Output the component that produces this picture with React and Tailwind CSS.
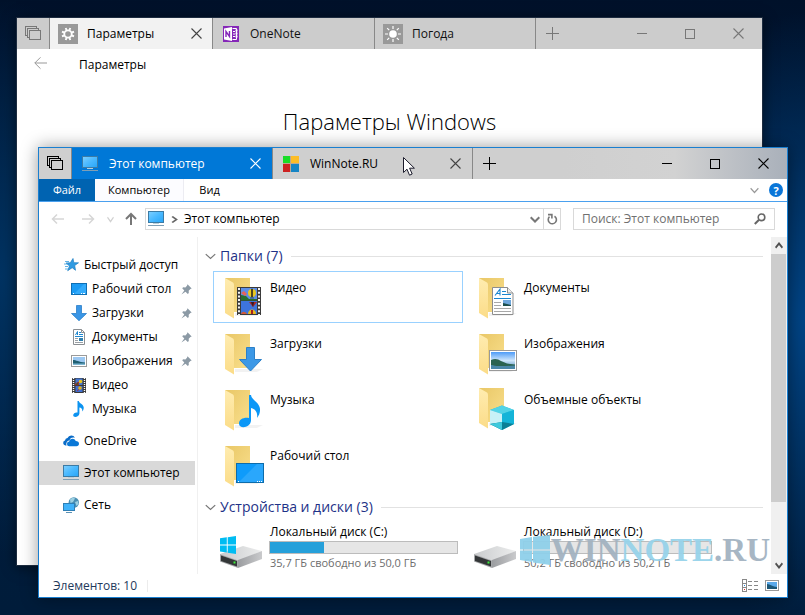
import React from "react";

/* ---------- line glyphs ---------- */

const TabSetIcon = ({ className }) => (
  <svg className={className} width="16" height="15" viewBox="0 0 16 15" fill="none" stroke="currentColor" shapeRendering="crispEdges">
    <path d="M2.500 9.500H.5V.5h11v2M4.500 11.500H2.500V2.500h11v2" />
    <rect x="4.500" y="4.500" width="11" height="9" />
  </svg>
);

const CloseIcon = ({ className }) => (
  <svg className={className} width="11" height="11" viewBox="0 0 11 11" stroke="currentColor" strokeWidth="1.1">
    <path d="M.5.5l10 10M10.500.5l-10 10" />
  </svg>
);

const PlusIcon = ({ className }) => (
  <svg className={className} width="13" height="13" viewBox="0 0 13 13" stroke="currentColor" shapeRendering="crispEdges">
    <path d="M6.500 0v13M0 6.500h13" />
  </svg>
);

const MinimizeIcon = () => (
  <svg width="10" height="10" viewBox="0 0 10 10" stroke="currentColor" shapeRendering="crispEdges">
    <path d="M0 4.500h10" />
  </svg>
);

const MaximizeIcon = () => (
  <svg width="10" height="10" viewBox="0 0 10 10" stroke="currentColor" fill="none" shapeRendering="crispEdges">
    <rect x=".5" y=".5" width="9" height="9" />
  </svg>
);

const Chevron = ({ className, width = 10, weight = 1.3 }) => (
  <svg className={className} width={width} height="7" viewBox="0 0 10 7" preserveAspectRatio="none" fill="none" stroke="currentColor" strokeWidth={weight}>
    <path d="M.7 1.200L5 5.500l4.300-4.300" />
  </svg>
);

const Arrow = ({ className, d }) => (
  <svg className={className} width="14" height="14" viewBox="0 0 14 14" fill="none" stroke="currentColor">
    <path d={d} />
  </svg>
);

/* ---------- tab icons ---------- */

const GearIcon = () => (
  <svg width="20" height="20" viewBox="0 0 20 20">
    <rect width="20" height="20" fill="#999" />
    <g stroke="#fff" fill="none">
      <circle cx="10" cy="10" r="3.700" strokeWidth="1.800" />
      <path strokeWidth="1.900" d="M8.500 6L7.700 4M11.500 6l.8-2M14 8.500l2-.8M14 11.500l2 .8M11.500 14l.8 2M8.500 14l-.8 2M6 11.500l-2 .8M6 8.500l-2-.8" />
    </g>
  </svg>
);

const OneNoteIcon = () => (
  <svg width="16" height="16" viewBox="0 0 16 16">
    <rect width="16" height="16" fill="#8526b8" />
    <path d="M1 2.500L9 1v14l-8-1.500z" fill="#fff" />
    <path d="M3 11V5.500L6.500 10.500V5" fill="none" stroke="#8526b8" strokeWidth="1.400" />
    <path d="M9.500 2.500h4v11h-4M10 5.500h2M10 8h2M10 10.500h2" fill="none" stroke="#fff" />
    <path d="M13.500 3.500v9" stroke="#fff" strokeWidth="2" strokeDasharray="2 1" />
  </svg>
);

const SunIcon = () => (
  <svg width="20" height="20" viewBox="0 0 20 20">
    <rect width="20" height="20" fill="#999" />
    <circle cx="10" cy="10" r="3.800" fill="#fff" />
    <path stroke="#fff" strokeWidth="1.200" d="M10 2v3M10 15v3M2 10h3M15 10h3M4.200 4.200l2 2M13.800 13.800l2 2M4.200 15.800l2-2M13.800 6.200l2-2" />
  </svg>
);

const SiteIcon = () => (
  <svg width="16" height="16" viewBox="0 0 16 16">
    <rect width="16" height="16" fill="#bca890" />
    <rect width="7" height="7" fill="#19dd28" />
    <rect x="8" width="8" height="7" fill="#fdbd27" />
    <rect y="8" width="7" height="8" fill="#cd2222" />
    <rect x="8" y="8" width="8" height="8" fill="#1685c5" />
  </svg>
);

/* ---------- small tree icons ---------- */

const MonitorIcon = () => (
  <svg width="16" height="16" viewBox="0 0 16 16">
    <defs>
      <linearGradient id="monitor" x1="0" y1="0" x2="1" y2="1">
        <stop offset="0" stopColor="#7fd0ff" />
        <stop offset=".5" stopColor="#4ab9ff" />
        <stop offset="1" stopColor="#27a5f7" />
      </linearGradient>
    </defs>
    <rect x=".5" y=".5" width="15" height="11" fill="url(#monitor)" stroke="#3c7ba5" />
    <path d="M5 12.500h6" stroke="#b9cfdb" />
    <path d="M0 14.500h16" stroke="#7f9fb5" />
  </svg>
);

const StarIcon = () => (
  <svg width="16" height="16" viewBox="0 0 16 16">
    <path d="M10 1.500l.8 4.200 4.700.1-3.800 2.700.8 4.800-3.300-2.600-4.500 3 1.800-4.800L3 6l4.300-.2z" fill="#2f9be2" stroke="#1d7cc0" strokeWidth=".7" />
    <path d="M2 4.500h4M1 7h4M2 9.500h3M2 12h3" stroke="#4fa9e2" strokeWidth=".9" />
  </svg>
);

const DesktopIcon = () => (
  <svg width="16" height="16" viewBox="0 0 16 16">
    <rect x=".5" y="2.500" width="15" height="11" fill="#1a9bf4" stroke="#0f6fb4" />
    <path d="M3 13L13 3h2v10z" fill="#45b6ff" opacity=".6" />
    <path d="M2 12.500h1M10 12.500h1M12 12.500h2" stroke="#fff" />
  </svg>
);

const DownloadIcon = () => (
  <svg width="16" height="16" viewBox="0 0 16 16">
    <path d="M5.500.5h5v8h5L8 15.700.5 8.500h5z" fill="#3a96e6" stroke="#2b7fc8" strokeWidth=".8" />
  </svg>
);

const DocIcon = () => (
  <svg width="16" height="16" viewBox="0 0 16 16">
    <path d="M2.500.5h8l3 3v12h-11z" fill="#fff" stroke="#8b8f93" />
    <path d="M10.500.5v3h3" fill="none" stroke="#8b8f93" />
    <path d="M4.500 6l2-3.500V6M8 3.500h2M8 5.500h4M4 7.500h8" stroke="#1d87d0" fill="none" />
    <path d="M4 9.500h3M4 11.500h3M4 13.500h8" stroke="#9aa0a5" />
    <rect x="8" y="9" width="4" height="3" fill="#2e7fae" />
  </svg>
);

const PictureIcon = () => (
  <svg width="16" height="16" viewBox="0 0 16 16">
    <rect x=".5" y="2.500" width="15" height="11" fill="#fff" stroke="#9a9a9a" />
    <rect x="2" y="4" width="12" height="8" fill="#9cc8f2" />
    <path d="M2 7c3 0 6 2 12 2.500V12H2z" fill="#1f5f72" />
    <path d="M2 10.500h12V12H2z" fill="#7fb8d4" />
  </svg>
);

const FilmIcon = () => (
  <svg width="16" height="16" viewBox="0 0 16 16">
    <rect x="1" y="1" width="14" height="15" fill="#3a3a3a" />
    <path d="M2.500 1v15M13.500 1v15" stroke="#fff" strokeWidth="1.400" strokeDasharray="1 1" />
    <rect x="4.500" y="1.500" width="7" height="6.500" fill="#4478d4" />
    <rect x="4.500" y="9" width="7" height="6" fill="#3f6fd0" />
    <circle cx="9.500" cy="4.500" r="1.800" fill="#e7c41d" />
    <circle cx="9" cy="11" r="1.800" fill="#e2b21d" />
    <path d="M4.500 7l3-2v3h-3zM6 14l2-1.500" fill="#1d6b2d" stroke="#b32625" strokeWidth=".8" />
  </svg>
);

const NotePath = "M10 0h1.500c.2 3.200 6.200 5.200 6.800 10 .3 2.300-.4 4.800-2 6.800.9-4.300-.8-6.800-4.800-8v14.200c-.6 5.200-9.500 6.800-9.500 2.800 0-3.300 4.300-5.500 8-4.500z";

const MusicIcon = () => (
  <svg width="16" height="16" viewBox="0 0 16 16">
    <path d="M6.500 0h1.300c.2 2.300 4.600 3 4.900 6.300.1 1.800-.4 3.100-1.400 4.200.3-2.400-.8-3.700-2.900-4v6c-.2 3.600-6.200 4.600-6.200 1.700 0-1.900 2.200-3.100 4.300-2.700z" fill="#0c93f0" />
  </svg>
);

const PinIcon = () => (
  <svg width="11" height="11" viewBox="0 0 11 11">
    <path d="M6.500.3l4.200 4.200-1.300.5-1.700 1.700.1 2.300-1 1L4.500 7.700.4 10.600 3.300 6.500 1.200 4.300l1-1 2.200.1L6 1.700z" fill="#8c9aa5" />
  </svg>
);

const OneDriveIcon = () => (
  <svg width="16" height="16" viewBox="0 0 16 16">
    <path d="M3.600 12.500H2.500A2.500 2.500 0 012 7.600 3 3 0 014.500 5 4.200 4.200 0 0112 4.800c-3.500-.8-5 .8-5.400 2.400-2.500.2-4 3-3 5.300z" fill="#0a6cc8" />
    <path d="M6.500 13.200a2.400 2.400 0 01-.3-4.800C6.500 5.200 11.500 4.400 12.700 8c2 0 3.300 1.100 3.300 2.700 0 1.400-1 2.500-2.500 2.500z" fill="#0a78d7" />
  </svg>
);

const NetworkIcon = () => (
  <svg width="16" height="16" viewBox="0 0 16 16">
    <circle cx="10.800" cy="5.500" r="5.200" fill="#4a8fb3" />
    <path d="M7 2.500c2-2 4-2 5-1L10 5 7.500 6zM12 5l3-1 .5 3-2 2z" fill="#9cd0e2" />
    <rect x=".5" y="6.500" width="11" height="7" fill="#3fb2fa" stroke="#2f7fb5" />
    <path d="M3 15.500h6" stroke="#5c92b5" />
  </svg>
);

/* ---------- large tile icons (48 x 48) ---------- */

const Folder = ({ raised, children }) => (
  <svg className="shrink-0 overflow-visible" width="48" height="48" viewBox="0 0 48 48">
    <defs>
      <linearGradient id="folderBack" x1="0" y1="0" x2="1" y2="1">
        <stop offset="0" stopColor="#e9c766" />
        <stop offset="1" stopColor="#f9df8d" />
      </linearGradient>
      <linearGradient id="folderFlap" x1="0" y1="0" x2="0" y2="1">
        <stop offset="0" stopColor="#ffecb0" />
        <stop offset="1" stopColor="#fbdc88" />
      </linearGradient>
    </defs>
    <g transform={raised ? "translate(0 -2)" : undefined}>
      <path d="M20 40h28l-6 3H20z" fill="#000" opacity=".05" />
      <path d="M10 5h25v34H18z" fill="url(#folderBack)" />
      <path d="M10 5l8 4.500q1 .8 1 2.500v33.500L10 40z" fill="url(#folderFlap)" />
    </g>
    {children}
  </svg>
);

const VideoFolder = () => (
  <Folder>
    <rect x="22" y="14" width="24" height="28" fill="#3b3b3b" />
    <path d="M24 15v27M44 15v27" stroke="#f2f2f2" strokeWidth="2" strokeDasharray="2 1.700" />
    <rect x="26" y="15" width="16" height="12" fill="#5d8ee6" />
    <rect x="26" y="28" width="16" height="13" fill="#3d74dc" />
    <path d="M26 22l5 1 3 3h8v1.500H26z" fill="#27702d" />
    <path d="M26 20l3-2 3 3-2 2z" fill="#e6655a" />
    <circle cx="37" cy="20" r="4" fill="#e9c81e" />
    <path d="M36.500 16h1v8h-1zM35 25h4" fill="#a8201f" stroke="#1d3420" strokeWidth=".7" />
    <path d="M34 29h8l-4 5z" fill="#a92626" />
    <path d="M36 29h3l-1 5z" fill="#2a1a2c" />
    <path d="M33 41c0-6 8-6 8 0z" fill="#e9b91e" />
    <path d="M26 41c1-3 4-3 6 0z" fill="#d15a3a" />
    <path d="M36 37h2v4h-2z" fill="#a8201f" />
  </Folder>
);

const DownloadsFolder = () => (
  <Folder>
    <path d="M31.500 18.500h8v12h7L35.500 42 24.500 30.500h7z" fill="#3c98e6" stroke="#2c80c8" />
  </Folder>
);

const MusicFolder = () => (
  <Folder>
    <path d="M34 10h2c.3 5 8.500 7 9 14 .2 3.500-.8 6.500-3 9 .9-5.500-1.200-9-6-10v12.500c-.5 7.500-12 9-12 3 0-4.300 5-6.500 10-5.500z" fill="#0b97f7" />
  </Folder>
);

const DesktopFolder = () => (
  <Folder>
    <rect x="21.500" y="22.500" width="27" height="19" fill="#0e9bfb" stroke="#0d6cab" />
    <path d="M24 41L42 23h6v18z" fill="#45b4fd" opacity=".5" />
    <path d="M23 40.500h1M42 40.500h1M44 40.500h1M46 40.500h1" stroke="#fff" />
  </Folder>
);

const DocumentsFolder = () => (
  <Folder>
    <path d="M23.500 14.500h15l5.500 5.500v21.500H23.500z" fill="#fff" stroke="#8d8d8d" />
    <path d="M38.500 14.500V20H44" fill="#eee" stroke="#8d8d8d" />
    <path d="M26 22.500l5-6.500v6.500M28 20.500h3M33 18.500h4M33 21.500h9M25 25.500h17" stroke="#1b86cf" strokeWidth="1.100" fill="none" />
    <path d="M25 29.500h7M25 32.500h7M25 35.500h17M25 38.500h17" stroke="#a8a8a8" />
    <rect x="34" y="27" width="8" height="6" fill="#6fa7dc" />
    <path d="M34 30l8 2v1h-8z" fill="#1d4f4d" />
  </Folder>
);

const PicturesFolder = () => (
  <Folder>
    <defs>
      <linearGradient id="sky" x1="0" y1="0" x2="0" y2="1">
        <stop offset="0" stopColor="#4d9bf7" />
        <stop offset=".5" stopColor="#cfe6fb" />
        <stop offset="1" stopColor="#4a86b8" />
      </linearGradient>
    </defs>
    <rect x="20.500" y="21.500" width="27" height="20" fill="#fff" stroke="#999" />
    <rect x="22" y="23" width="24" height="17" fill="url(#sky)" />
    <path d="M22 31c4-2 7-1 10 1l6 2.500 8 1v1.500c-8 0-16 1-24-.5z" fill="#2c6350" />
    <path d="M22 36c8 2 16 1 24 .5V40H22z" fill="#4b87a8" />
  </Folder>
);

const ObjectsFolder = () => (
  <Folder raised>
    <path d="M33 20.500l12 4.500v14l-12 6-12-6V25z" fill="#23b9d8" />
    <path d="M21 25l12-4.500L45 25l-12 4z" fill="#52d3e6" />
    <path d="M21 25l12 4v9l-12 1z" fill="#c9f1f7" />
    <path d="M33 29l12-4v14l-12-1z" fill="#14b4d8" />
    <path d="M21 39l12-2 12 2-12 6z" fill="#0b7f96" />
    <path d="M21 39l12-2v8z" fill="#3fc9dc" />
  </Folder>
);

const DriveIcon = ({ system }) => (
  <svg className="shrink-0" width="48" height="48" viewBox="0 0 48 48">
    <defs>
      <linearGradient id="driveTop" x1="0" y1="0" x2="1" y2="0">
        <stop offset="0" stopColor="#c9cbcd" />
        <stop offset="1" stopColor="#eceded" />
      </linearGradient>
      <linearGradient id="driveSide" x1="0" y1="0" x2="1" y2="0">
        <stop offset="0" stopColor="#9b9da0" />
        <stop offset="1" stopColor="#c9cacc" />
      </linearGradient>
    </defs>
    <path d="M5 31l23-8 19 5-24 10z" fill="url(#driveTop)" />
    <path d="M23 37l24-9v8l-24 9z" fill="url(#driveSide)" />
    <path d="M5 31l18 6.500V45L5 38.500z" fill="#a5a7a9" />
    <path d="M6 32.500l16 5.500v5.500L6 38z" fill="#333637" />
    <rect x="18.500" y="38.500" width="2" height="2" fill="#3bef3b" />
    {system && (
      <path d="M5 15.300l6.800-1v7.200H5zM12.700 14.200L21 13v8.500h-8.300zM5 22.400h6.800v7.200L5 28.600zM12.700 22.400H21V31l-8.300-1.300z" fill="#00bcf2" />
    )}
  </svg>
);

/* ---------- shared window parts ---------- */

const WindowButtons = () => (
  <div className="ml-auto flex">
    <button aria-label="Свернуть" className="flex w-12 items-center justify-center"><MinimizeIcon /></button>
    <button aria-label="Развернуть" className="flex w-12 items-center justify-center"><MaximizeIcon /></button>
    <button aria-label="Закрыть" className="flex w-12 items-center justify-center"><CloseIcon /></button>
  </div>
);

const SettingsWindow = () => (
  <section className="absolute top-[17px] right-[42px] bottom-[49px] left-4 flex flex-col border border-[#1d2c40] bg-white text-xs text-black shadow-[0_2px_12px_rgba(0,0,0,0.5)]">
    <header className="flex h-[31px] shrink-0 bg-[#ccc] text-[#777]">
      <button aria-label="Вкладки" className="flex w-[33px] items-center justify-center border-r border-[#888]"><TabSetIcon /></button>
      <div className="flex w-[163px] items-center border-r border-[#888] bg-[#f2f2f2] pr-2.5 pl-2 text-black">
        <button className="flex flex-1 items-center gap-[9px]"><GearIcon />Параметры</button>
        <button aria-label="Закрыть вкладку"><CloseIcon className="text-[#444]" /></button>
      </div>
      <button className="flex w-[162px] items-center gap-[11px] border-r border-[#888] pl-2.5 text-[#111]"><OneNoteIcon />OneNote</button>
      <button className="flex w-[161px] items-center gap-[9px] border-r border-[#888] pl-2 text-[#111]"><SunIcon />Погода</button>
      <button aria-label="Новая вкладка" className="flex w-[33px] items-center justify-center"><PlusIcon /></button>
      <WindowButtons />
    </header>
    <div className="flex h-8 items-center pl-[17px]">
      <button aria-label="Назад" className="mb-1 text-[#999]"><Arrow d="M.8 7H13M6.500 1.300L.8 7l5.700 5.700" /></button>
      <span className="pl-[31px]">Параметры</span>
    </div>
    <h1 className="mt-[22px] text-center text-[22px] leading-9 font-light">Параметры Windows</h1>
  </section>
);

const pinned = [
  [DesktopIcon, "Рабочий стол", true],
  [DownloadIcon, "Загрузки", true],
  [DocIcon, "Документы", true],
  [PictureIcon, "Изображения", true],
  [FilmIcon, "Видео", false],
  [MusicIcon, "Музыка", false],
];

const NavRow = ({ icon: Icon, label, pin, nested, selected }) => (
  <li>
    <button className={`flex h-6 w-[156px] items-center gap-[5px] ${nested ? "pl-8" : "pl-6"} ${selected ? "bg-[#d9d9d9]" : ""}`}>
      <Icon />
      <span className="whitespace-nowrap">{label}</span>
      {pin && <span className="mr-[3px] ml-auto"><PinIcon /></span>}
    </button>
  </li>
);

const NavPane = () => (
  <nav className="w-[159px] shrink-0 border-r border-[#f0f0f0] pt-4">
    <ul>
      <NavRow icon={StarIcon} label="Быстрый доступ" />
      {pinned.map(([icon, label, pin]) => (
        <NavRow key={label} icon={icon} label={label} pin={pin} nested />
      ))}
    </ul>
    <ul className="mt-2 flex flex-col gap-2">
      <NavRow icon={OneDriveIcon} label="OneDrive" />
      <NavRow icon={MonitorIcon} label="Этот компьютер" selected />
      <NavRow icon={NetworkIcon} label="Сеть" />
    </ul>
  </nav>
);

const GroupHeader = ({ children }) => (
  <h2 className="flex h-[22px] items-center pl-[7px] text-[#1e3287]">
    <button className="flex items-center gap-1 text-sm whitespace-nowrap">
      <Chevron className="text-[#777]" width={11} weight={1.1} />
      {children}
    </button>
    <span className="ml-2 h-px flex-1 bg-[#e2e2e2]" />
  </h2>
);

const folders = [
  [VideoFolder, "Видео"],
  [DocumentsFolder, "Документы"],
  [DownloadsFolder, "Загрузки"],
  [PicturesFolder, "Изображения"],
  [MusicFolder, "Музыка"],
  [ObjectsFolder, "Объемные объекты"],
  [DesktopFolder, "Рабочий стол"],
];

const drives = [
  { name: "Локальный диск (C:)", free: "35,7 ГБ свободно из 50,0 ГБ", used: 29, system: true },
  { name: "Локальный диск (D:)", free: "50,2 ГБ свободно из 50,2 ГБ", used: 0 },
];

const Drive = ({ name, free, used, system }) => (
  <button className="flex h-[52px] items-start gap-1.5 pt-px pl-0.5 text-left">
    <DriveIcon system={system} />
    <span className="block w-[189px] whitespace-nowrap">
      <span className="block pl-px leading-[18px]">{name}</span>
      <span className="block h-[13px] border border-[#bcbcbc] bg-[#e6e6e6]">
        <span className="block h-full bg-[#26a0da]" style={{ width: `${used}%` }} />
      </span>
      <span className="block pl-px text-[11px] leading-[18px] text-[#6d6d6d]">{free}</span>
    </span>
  </button>
);

const Watermark = () => (
  <div className="pointer-events-none absolute right-[17px] bottom-[31px] flex items-center gap-px opacity-95">
    <svg width="30" height="30" viewBox="0 0 30 30" fill="#8fd0ea">
      <path d="M0 4l12-2v12.500H0zM13 1.800L30 0v14.500H13zM0 15.500h12V27L0 25zM13 15.500h17V30l-17-2.500z" />
    </svg>
    <span className="font-['Liberation_Serif',serif] text-[33px] leading-8 font-bold text-[#a3b3c1]">
      WIN<span className="text-[#97d3ea]">NOTE</span>.RU
    </span>
  </div>
);

const Scrollbar = () => (
  <div className="flex w-4 shrink-0 flex-col bg-[#f0f0f0] text-[#505050]">
    <button aria-label="Прокрутить вверх" className="flex h-[17px] items-center justify-center"><Chevron className="rotate-180" width={8} weight={2.2} /></button>
    <div className="mr-px flex-1 bg-[#cdcdcd]" />
    <div className="h-[55px]" />
    <button aria-label="Прокрутить вниз" className="flex h-[17px] items-center justify-center"><Chevron width={8} weight={2.2} /></button>
  </div>
);

const ExplorerWindow = () => (
  <section className="absolute top-[147px] right-[17px] bottom-[17px] left-[38px] flex flex-col border border-[#1a7fd0] bg-white text-xs text-black shadow-[0_0_16px_rgba(0,0,0,0.4)]">
    <header className="flex h-[31px] shrink-0 bg-linear-to-r from-[#cfcfcf] from-70% via-[#d2d2d2] via-85% to-[#a9b0ba] text-black">
      <button aria-label="Вкладки" className="flex w-[33px] items-center justify-center border-r border-[#888]"><TabSetIcon /></button>
      <div className="flex w-[201px] items-center border-r border-[#888] bg-[#0078d7] pr-[11px] pl-2.5 text-white">
        <button className="flex flex-1 items-center gap-[11px] whitespace-nowrap"><MonitorIcon />Этот компьютер</button>
        <button aria-label="Закрыть вкладку"><CloseIcon /></button>
      </div>
      <div className="flex w-[200px] items-center border-r border-[#888] pr-[11px] pl-2.5">
        <button className="flex flex-1 items-center gap-[11px]"><SiteIcon />WinNote.RU</button>
        <button aria-label="Закрыть вкладку"><CloseIcon className="text-[#444]" /></button>
      </div>
      <button aria-label="Новая вкладка" className="flex w-[33px] items-center justify-center"><PlusIcon /></button>
      <WindowButtons />
    </header>

    <div className="flex h-[23px] shrink-0 border-b border-[#4aa0ee] text-[11px]">
      <button className="w-14 bg-[#0063b1] text-white">Файл</button>
      <button className="w-[89px] border-r border-[#ececf2] bg-[#fcfcff]">Компьютер</button>
      <button className="w-[51px]">Вид</button>
      <div className="ml-auto flex items-center gap-2.5 pr-1">
        <button aria-label="Развернуть ленту" className="text-[#999]"><Chevron width={9} /></button>
        <button aria-label="Справка" className="flex size-3.5 items-center justify-center rounded-full bg-[#0a76d8] text-[11px] leading-none font-bold text-white">?</button>
      </div>
    </div>

    <div className="flex h-[35px] shrink-0 items-start pt-1.5 pr-3">
      <div className="flex h-[22px] items-center pl-3">
        <button aria-label="Назад" className="text-[#d6d6d6]"><Arrow className="stroke-[1.5]" d="M1.500 7H13M6 2.500L1.500 7 6 11.500" /></button>
        <button aria-label="Вперёд" className="ml-4 text-[#d6d6d6]"><Arrow className="stroke-[1.5]" d="M12.500 7H1M8 2.500L12.500 7 8 11.500" /></button>
        <button aria-label="Недавние" className="ml-3 text-[#d0d0d0]"><Chevron width={7} weight={1.6} /></button>
        <button aria-label="Вверх" className="ml-2.5 text-[#777]"><Arrow className="stroke-2" d="M7 13V2M2 7l5-5 5 5" /></button>
      </div>
      <div className="ml-[7px] flex h-[22px] flex-1 items-center border border-[#d9d9d9] pl-0.5">
        <MonitorIcon />
        <span className="flex w-5 justify-center text-[#666]"><Chevron className="-rotate-90" width={7} weight={2} /></span>
        <button className="flex-1 text-left">Этот компьютер</button>
        <button aria-label="Предыдущие адреса" className="mr-[3px] text-[#777]"><Chevron weight={2} /></button>
        <button aria-label="Обновить" className="flex h-full w-[17px] items-center justify-center border-l border-[#d9d9d9] text-[#777]">
          <svg width="11" height="12" viewBox="0 0 11 12" fill="none" stroke="currentColor" strokeWidth="1.600">
            <path d="M7.500 3.200A4.100 4.100 0 112.500 3.700" />
            <path d="M1 1.600h3.900v4" />
          </svg>
        </button>
      </div>
      <label className="ml-3 flex h-[22px] w-[202px] items-center border border-[#d9d9d9] pr-2 pl-2 text-[#666]">
        <input aria-label="Поиск" placeholder="Поиск: Этот компьютер" className="min-w-0 flex-1 bg-transparent outline-none placeholder:text-[#707070]" />
        <svg width="12" height="12" viewBox="0 0 12 12" fill="none" stroke="currentColor" strokeWidth="1.600">
          <circle cx="7.500" cy="4.300" r="3.300" />
          <path d="M5 6.800L.8 11" strokeWidth="2" />
        </svg>
      </label>
    </div>

    <div className="flex min-h-0 flex-1">
      <NavPane />
      <main className="min-w-0 flex-1 overflow-hidden pt-2 pr-2">
        <GroupHeader>Папки (7)</GroupHeader>
        <div className="mt-1 ml-[15px] grid grid-cols-[250px_250px] gap-1">
          {folders.map(([Icon, label], i) => (
            <button key={label} className={`flex h-[52px] items-start gap-[7px] border p-px text-left ${i === 0 ? "border-[#99d1ff]" : "border-transparent"}`}>
              <Icon />
              <span className="pt-1.5 leading-[18px]">{label}</span>
            </button>
          ))}
        </div>
        <div className="mt-[5px]">
          <GroupHeader>Устройства и диски (3)</GroupHeader>
        </div>
        <div className="mt-1 ml-[15px] grid grid-cols-[250px_250px] gap-1">
          {drives.map((d) => <Drive key={d.name} {...d} />)}
        </div>
      </main>
      <Scrollbar />
    </div>

    <footer className="flex h-[23px] shrink-0 items-center pr-2 pl-3.5 text-[#1e395b]">
      <span className="border-r border-[#ececec] pr-2.5 leading-3">Элементов: 10</span>
      <button aria-label="Таблица" className="ml-auto">
        <svg width="16" height="13" viewBox="0 0 16 13" fill="none" stroke="#888" shapeRendering="crispEdges">
          <path d="M.5.5h4v12h-4zM.5 4.500h4M.5 8.500h4M6 2.500h4M12 2.500h4M6 6.500h4M12 6.500h4M6 10.500h4M12 10.500h4" />
          <path d="M2 6.500h1" stroke="#2786e0" />
          <path d="M2 10.500h1" stroke="#e02727" />
        </svg>
      </button>
      <button aria-label="Значки" className="ml-[7px]">
        <svg width="14" height="11" viewBox="0 0 14 11">
          <rect x=".5" y=".5" width="13" height="10" fill="#fff" stroke="#999" />
          <rect x="2" y="2" width="10" height="7" fill="#5aa9ea" />
          <path d="M2 4c3 0 6 3 10 3v2H2z" fill="#1c5777" />
        </svg>
      </button>
    </footer>
    <Watermark />
  </section>
);

export default function App() {
  return (
    <div className="relative h-screen w-full overflow-hidden bg-[#001a38] bg-[radial-gradient(ellipse_20%_50%_at_100%_52%,#004485_0%,rgba(0,60,118,0.6)_50%,transparent_100%),radial-gradient(ellipse_20%_45%_at_0%_45%,#003362_0%,transparent_100%),linear-gradient(to_bottom,#00112a,#001d3d_50%,#001c3a)] font-['Open_Sans','Noto_Sans',sans-serif]">
      <SettingsWindow />
      <ExplorerWindow />
      <svg className="absolute top-[156px] left-[402px]" width="14" height="21" viewBox="0 0 14 21">
        <path d="M1.500 1.500v15l3.500-3.300 2.500 6 2.700-1.200-2.600-5.800h4.800z" fill="#fff" stroke="#1b1b2b" />
      </svg>
    </div>
  );
}
